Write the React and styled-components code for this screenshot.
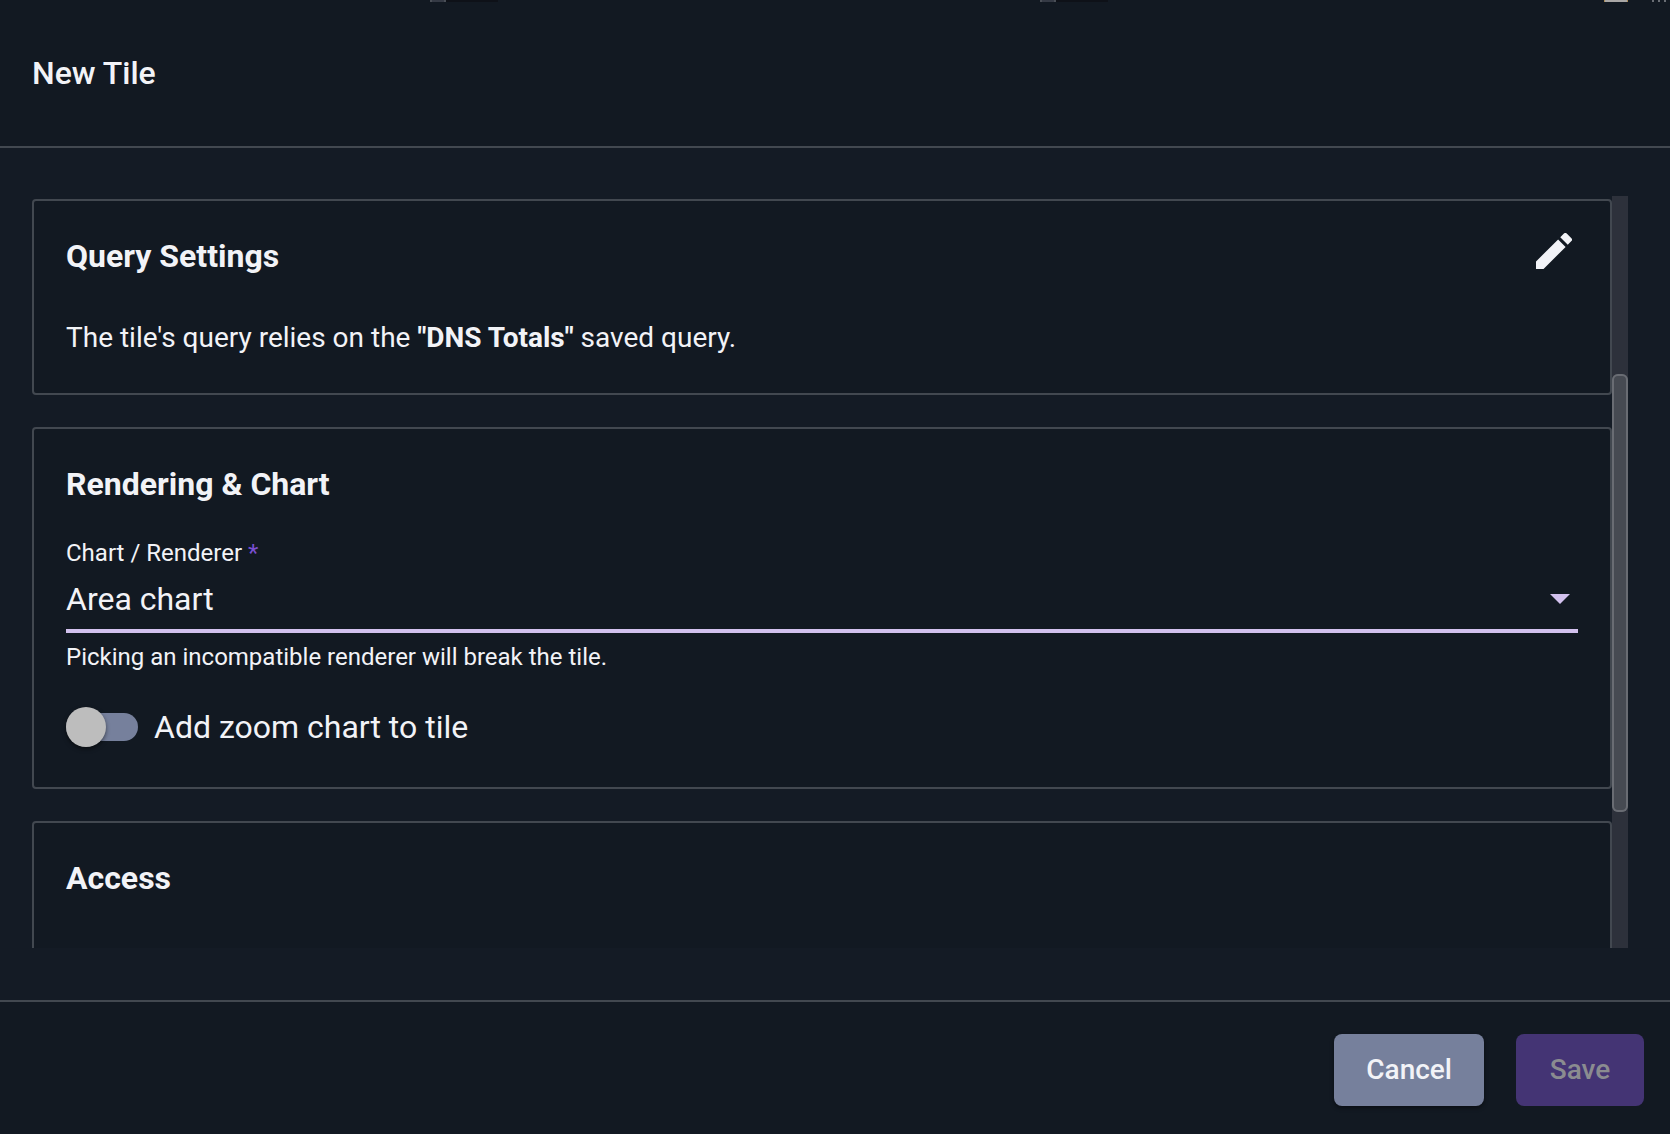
import React, { useState } from "react";
import styled, { createGlobalStyle } from "styled-components";

const color = {
  panel: "#121922",
  body: "#141b25",
  line: "#424850",
  text: "#f2f3f7",
  focus: "#d2c1ee",
  accent: "#7a4fd0",
  slate: "#76809c",
};

const GlobalStyle = createGlobalStyle`
  * { box-sizing: border-box; }
  body {
    margin: 0;
    background: ${color.body};
    color: ${color.text};
    font-family: Roboto, "Liberation Sans", sans-serif;
  }
`;

const Page = styled.div`
  display: flex;
  flex-direction: column;
  height: 100vh;
`;

const Backdrop = styled.div`
  display: flex;
  flex: none;
  height: 2px;
  padding-left: 430px;
  background: ${color.panel};

  > * { flex: none; }
`;

const Handle = styled.span`
  width: 16px;
  border: solid #4a4f57;
  border-width: 0 2px;
  background: #353a45;
`;

const Field = styled.span`
  width: 52px;
  background: #0e1118;

  & + ${Handle} { margin-left: 542px; }
`;

const Badge = styled.span`
  width: 24px;
  margin-left: auto;
  margin-right: 24px;
  border: solid #a98a55;
  border-width: 0 1px;
  background: #a9a7a6;
`;

const Speck = styled.span`
  width: 2px;
  margin-right: 4px;
  background: #6a6e75;
`;

const Header = styled.header`
  display: flex;
  align-items: center;
  flex: none;
  height: 146px;
  padding: 0 32px 2px;
  border-bottom: 2px solid ${color.line};
  background: ${color.panel};
`;

const Title = styled.h1`
  margin: 0;
  font-size: 32px;
  line-height: 40px;
  font-weight: 500;
`;

const Body = styled.main`
  display: flex;
  flex: 1;
  min-height: 0;
  padding: 48px 42px 52px 32px;
`;

const Viewport = styled.div`
  display: flex;
  flex-direction: column;
  flex: 1;
  min-width: 0;
  gap: 32px;
  padding-top: 3px;
  overflow: hidden;
`;

const Card = styled.section`
  display: flex;
  flex-direction: column;
  flex: none;
  min-height: 196px;
  padding: 32px;
  border: 2px solid ${color.line};
  border-radius: 4px;
  background: ${color.panel};
`;

const CardHead = styled.div`
  display: flex;
  align-items: flex-start;
  justify-content: space-between;
  padding-right: 6px;
`;

const CardTitle = styled.h2`
  margin: 0;
  font-size: 32px;
  line-height: 46px;
  font-weight: 700;
`;

const IconButton = styled.button`
  display: flex;
  padding: 0;
  border: 0;
  background: none;
  color: ${color.text};
  cursor: pointer;
`;

const Paragraph = styled.p`
  margin: 36px 0 0;
  font-size: 28px;
  line-height: 46px;
`;

const Label = styled.label`
  margin-top: 30px;
  font-size: 24px;
  line-height: 32px;
`;

const Required = styled.span`
  color: ${color.accent};
`;

const SelectRow = styled.div`
  display: grid;
  align-items: center;
  border-bottom: 4px solid ${color.focus};

  > * { grid-area: 1 / 1; }
`;

const Select = styled.select`
  width: 100%;
  height: 60px;
  padding: 0;
  border: 0;
  outline: 0;
  appearance: none;
  background: none;
  color: ${color.text};
  font: 400 32px/60px Roboto, "Liberation Sans", sans-serif;

  option { background: ${color.panel}; }
`;

const Caret = styled.svg`
  justify-self: end;
  margin-right: 8px;
  fill: ${color.focus};
  pointer-events: none;
`;

const Hint = styled.p`
  margin: 8px 0 0;
  font-size: 24px;
  line-height: 32px;
`;

const ToggleRow = styled.label`
  display: flex;
  align-items: center;
  align-self: flex-start;
  gap: 16px;
  height: 56px;
  margin-top: 26px;
  font-size: 32px;
  cursor: pointer;
`;

const Toggle = styled.input`
  display: flex;
  align-items: center;
  width: 72px;
  height: 28px;
  margin: 0;
  appearance: none;
  border-radius: 14px;
  background: ${color.slate};
  cursor: pointer;

  &::before {
    content: "";
    width: 40px;
    height: 40px;
    border-radius: 50%;
    background: #bdbdbd;
    box-shadow: 0 2px 4px rgba(0, 0, 0, 0.5);
  }

  &:checked { justify-content: flex-end; }
`;

const Track = styled.div`
  display: flex;
  flex-direction: column;
  flex: none;
  width: 16px;
  background: #2d313b;
`;

const Space = styled.span`
  flex: ${(p) => p.$share} 1 0;
`;

const Thumb = styled.span`
  flex: 438 1 0;
  border-radius: 6px;
  background: #464a52;
  box-shadow: inset 0 0 0 2px #696c73;
`;

const Footer = styled.footer`
  display: flex;
  justify-content: flex-end;
  flex: none;
  gap: 32px;
  height: 134px;
  padding: 32px 26px 28px;
  border-top: 2px solid ${color.line};
  background: ${color.panel};
`;

const Button = styled.button`
  min-width: 128px;
  height: 72px;
  padding: 0 32px;
  border: 0;
  border-radius: 8px;
  background: ${(p) => (p.$primary ? "#443474" : color.slate)};
  color: ${(p) => (p.$primary ? "#8b8c90" : color.text)};
  box-shadow: ${(p) => (p.$primary ? "none" : "0 2px 4px rgba(0, 0, 0, 0.45)")};
  font: 500 28px/72px Roboto, "Liberation Sans", sans-serif;
`;

export default function App() {
  const [zoom, setZoom] = useState(false);
  return (
    <>
      <GlobalStyle />
      <Page>
        <Backdrop>
          <Handle />
          <Field />
          <Handle />
          <Field />
          <Badge />
          <Speck />
          <Speck />
          <Speck />
        </Backdrop>
        <Header>
          <Title>New Tile</Title>
        </Header>
        <Body>
          <Viewport>
            <Card>
              <CardHead>
                <CardTitle>Query Settings</CardTitle>
                <IconButton type="button" aria-label="Edit query">
                  <svg width="36" height="36" viewBox="3 3 18 18" fill="currentColor" aria-hidden="true">
                    <path d="M3 17.25V21h3.75L17.81 9.94l-3.75-3.75L3 17.25zM20.71 7.04a.996.996 0 0 0 0-1.41l-2.34-2.34a.996.996 0 0 0-1.41 0l-1.83 1.83 3.75 3.75 1.83-1.83z" />
                  </svg>
                </IconButton>
              </CardHead>
              <Paragraph>
                The tile's query relies on the <b>"DNS Totals"</b> saved query.
              </Paragraph>
            </Card>
            <Card>
              <CardTitle>Rendering &amp; Chart</CardTitle>
              <Label htmlFor="renderer">
                Chart / Renderer <Required>*</Required>
              </Label>
              <SelectRow>
                <Select id="renderer" defaultValue="area">
                  <option value="area">Area chart</option>
                </Select>
                <Caret width="20" height="10" viewBox="0 0 20 10" aria-hidden="true">
                  <path d="M0 0h20L10 10z" />
                </Caret>
              </SelectRow>
              <Hint>Picking an incompatible renderer will break the tile.</Hint>
              <ToggleRow>
                <Toggle
                  type="checkbox"
                  role="switch"
                  checked={zoom}
                  onChange={(e) => setZoom(e.target.checked)}
                />
                Add zoom chart to tile
              </ToggleRow>
            </Card>
            <Card>
              <CardTitle>Access</CardTitle>
            </Card>
          </Viewport>
          <Track aria-hidden="true">
            <Space $share={178} />
            <Thumb />
            <Space $share={136} />
          </Track>
        </Body>
        <Footer>
          <Button type="button">Cancel</Button>
          <Button type="button" $primary disabled>
            Save
          </Button>
        </Footer>
      </Page>
    </>
  );
}
